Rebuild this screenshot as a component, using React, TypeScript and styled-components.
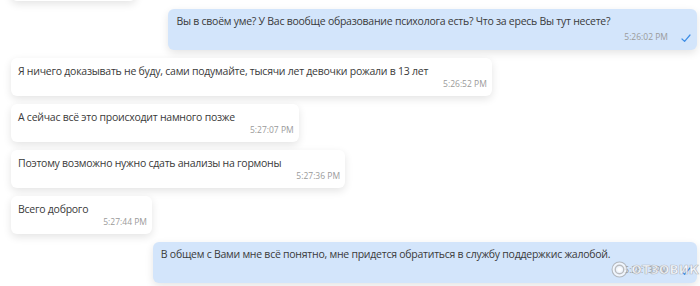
import styled, { createGlobalStyle } from "styled-components";

const GlobalStyle = createGlobalStyle`
  html, body {
    margin: 0;
    padding: 0;
    background: #fff;
  }
  body {
    font-family: "Open Sans", "Noto Sans", sans-serif;
  }
`;

// окно чата, прокручено вниз
const ChatWindow = styled.div`
  position: relative;
  width: 700px;
  height: 286px;
  overflow: hidden;
  display: flex;
  flex-direction: column;
  justify-content: flex-end;
  gap: 8px;
  padding: 0 3px 3px 11px;
  box-sizing: border-box;
`;

const Row = styled.div<{ $mine?: boolean }>`
  display: flex;
  flex-shrink: 0;
  justify-content: ${(p) => (p.$mine ? "flex-end" : "flex-start")};
`;

const Bubble = styled.div<{ $mine?: boolean }>`
  display: flex;
  align-items: flex-start;
  background: ${(p) => (p.$mine ? "#d3e5fb" : "#fff")};
  border-radius: 6px;
  box-shadow: 0 3px 8px rgba(0, 0, 0, 0.11);
  padding: ${(p) => (p.$mine ? "5px 6px 7px 8px" : "6px 5px 6px 7px")};
`;

// сообщение выше, ушедшее за верхний край (видна только тень)
const HiddenBubble = styled.div`
  width: 125px;
  height: 38px;
  background: #fff;
  border-radius: 6px;
  box-shadow: 0 3px 8px rgba(0, 0, 0, 0.11);
`;

const Text = styled.div`
  font-size: 10.5px;
  letter-spacing: -0.25px;
  line-height: 15px;
  color: #3a3a3a;
  white-space: nowrap;
`;

const Meta = styled.div<{ $mine?: boolean }>`
  display: flex;
  align-items: flex-start;
  gap: 13px;
  margin-left: ${(p) => (p.$mine ? "14px" : "15px")};
  padding-top: ${(p) => (p.$mine ? "17px" : "14px")};
`;

const Time = styled.span`
  font-size: 8.5px;
  line-height: 12px;
  color: #9a9a9a;
  white-space: nowrap;
`;

const Check = styled.svg`
  margin-top: 3px;
  display: block;
`;

// водяной знак поверх последнего сообщения
const Watermark = styled.div`
  position: absolute;
  right: 1px;
  bottom: 8px;
  display: flex;
  align-items: center;
  gap: 3px;
  font-family: "DejaVu Sans", sans-serif;
  font-weight: bold;
  font-size: 12px;
  letter-spacing: 0.2px;
  color: rgba(255, 255, 255, 0.75);
  -webkit-text-stroke: 0.7px rgba(150, 150, 150, 0.6);
`;

type Msg = { id: number; text: string; time: string; mine?: boolean };

const messages: Msg[] = [
  {
    id: 1,
    text: "Вы в своём уме? У Вас вообще образование психолога есть? Что за ересь Вы тут несете?",
    time: "5:26:02 PM",
    mine: true,
  },
  {
    id: 2,
    text: "Я ничего доказывать не буду, сами подумайте, тысячи лет девочки рожали в 13 лет",
    time: "5:26:52 PM",
  },
  { id: 3, text: "А сейчас всё это происходит намного позже", time: "5:27:07 PM" },
  { id: 4, text: "Поэтому возможно нужно сдать анализы на гормоны", time: "5:27:36 PM" },
  { id: 5, text: "Всего доброго", time: "5:27:44 PM" },
  {
    id: 6,
    text: "В общем с Вами мне всё понятно, мне придется обратиться в службу поддержкис жалобой.",
    time: "5:28:13 PM",
    mine: true,
  },
];

function CheckIcon() {
  return (
    <Check width="10" height="9" viewBox="0 0 10 9">
      <path d="M1 5 L3.6 7.4 L9 1" fill="none" stroke="#3d8ee6" strokeWidth="1.2" strokeLinecap="round" strokeLinejoin="round" />
    </Check>
  );
}

function Logo() {
  return (
    <svg width="17" height="17" viewBox="0 0 16 16">
      <circle cx="8" cy="8" r="7" fill="rgba(255,255,255,0.65)" stroke="rgba(150,150,150,0.6)" strokeWidth="1" />
      <circle cx="8" cy="8" r="4" fill="none" stroke="rgba(150,150,150,0.6)" strokeWidth="1.3" />
      <circle cx="8" cy="8" r="2" fill="rgba(255,255,255,0.9)" />
    </svg>
  );
}

const App = () => {
  return (
    <>
      <GlobalStyle />
      <ChatWindow>
        <Row>
          <HiddenBubble />
        </Row>
        {messages.map((m) => (
          <Row key={m.id} $mine={m.mine}>
            <Bubble $mine={m.mine}>
              <Text>{m.text}</Text>
              <Meta $mine={m.mine}>
                <Time>{m.time}</Time>
                {m.mine && <CheckIcon />}
              </Meta>
            </Bubble>
          </Row>
        ))}
        <Watermark>
          <Logo />
          <span>ОТЗОВИК</span>
        </Watermark>
      </ChatWindow>
    </>
  );
};

export default App;
